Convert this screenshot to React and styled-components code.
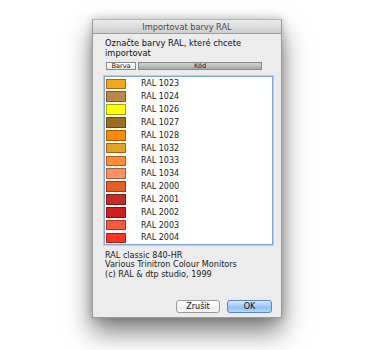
import React from 'react';
import styled, { createGlobalStyle } from 'styled-components';

const Global = createGlobalStyle`
  html, body { margin: 0; padding: 0; background: #ffffff; }
  body { font-family: "DejaVu Sans", "Liberation Sans", sans-serif; }
`;

const Page = styled.div`
  width: 380px;
  height: 350px;
  padding: 19px 0 0 92px;
  box-sizing: border-box;
`;

const Window = styled.div`
  width: 190px;
  height: 299px;
  box-sizing: border-box;
  background: #ececec;
  border: 1px solid #9a9a9a;
  border-top-color: #b4b4b4;
  box-shadow: 0 14px 24px rgba(0, 0, 0, 0.5), 0 0 9px rgba(0, 0, 0, 0.22);
  display: flex;
  flex-direction: column;
`;

const TitleBar = styled.div`
  height: 13px;
  background: linear-gradient(#ebebeb, #cfcfcf);
  border-bottom: 1px solid #9c9c9c;
  display: flex;
  align-items: center;
  justify-content: center;
  font-size: 8.2px;
  color: #4a4a4a;
`;

const Body = styled.div`
  flex: 1;
  display: flex;
  flex-direction: column;
  padding: 5px 8px 0 11px;
`;

const Prompt = styled.div`
  font-size: 8.3px;
  line-height: 9.5px;
  color: #111;
  margin-left: 1px;
`;

const HeaderRow = styled.div`
  display: flex;
  gap: 2px;
  margin: 4px 0 0 2px;
  width: 156px;
  height: 8px;
`;

const HeadCell = styled.div`
  box-sizing: border-box;
  width: ${p => (p.$grow ? 'auto' : '30px')};
  flex: ${p => (p.$grow ? 1 : 'none')};
  border: 1px solid #8a8a8a;
  background: ${p => (p.$active ? 'linear-gradient(#d2d2d2, #a9a9a9)' : 'linear-gradient(#ffffff, #e4e4e4)')};
  font-size: 6.6px;
  line-height: 6px;
  color: #222;
  display: flex;
  align-items: center;
  justify-content: center;
`;

const ListBox = styled.div`
  margin-top: 6px;
  width: 169px;
  height: 169px;
  box-sizing: border-box;
  background: #fff;
  border: 1px solid #7ea7de;
  box-shadow: 0 0 0 1px rgba(140, 180, 230, 0.55);
  padding-top: 0.5px;
`;

const Row = styled.div`
  height: 12.83px;
  display: flex;
  align-items: center;
`;

const Swatch = styled.div`
  width: 20px;
  height: 10.7px;
  box-sizing: border-box;
  margin-left: 1px;
  background: ${p => p.$color};
  border: 1px solid rgba(0, 0, 0, 0.35);
`;

const RowLabel = styled.span`
  margin-left: 15px;
  font-size: 8px;
  color: #1a1a1a;
`;

const Info = styled.div`
  margin-top: 6px;
  margin-left: 1px;
  font-size: 8.1px;
  line-height: 9.4px;
  color: #1a1a1a;
`;

const Buttons = styled.div`
  margin-top: auto;
  margin-bottom: 4px;
  display: flex;
  justify-content: flex-end;
  gap: 7px;
  padding-right: 1px;
`;

const Button = styled.div`
  width: ${p => (p.$primary ? '45px' : '44px')};
  height: 13px;
  box-sizing: border-box;
  border-radius: 3px;
  border: 1px solid ${p => (p.$primary ? '#5c86c2' : '#9a9a9a')};
  background: ${p => (p.$primary ? 'linear-gradient(#d4e8fc, #9ccaf5 50%, #86bcf2 51%, #b4d9fc)' : 'linear-gradient(#ffffff, #f3f3f3 50%, #e8e8e8 51%, #f7f7f7)')};
  font-size: 8px;
  color: #111;
  display: flex;
  align-items: center;
  justify-content: center;
`;

const colors = [
  ['RAL 1023', '#f8a60f'],
  ['RAL 1024', '#bf8648'],
  ['RAL 1026', '#ffff00'],
  ['RAL 1027', '#9c6d1e'],
  ['RAL 1028', '#ff8a00'],
  ['RAL 1032', '#eca023'],
  ['RAL 1033', '#ff8c32'],
  ['RAL 1034', '#fc9060'],
  ['RAL 2000', '#e85c1c'],
  ['RAL 2001', '#c42c24'],
  ['RAL 2002', '#d41b1b'],
  ['RAL 2003', '#f8583a'],
  ['RAL 2004', '#ff3320'],
];

export default function App() {
  return (
    <Page>
      <Global />
      <Window>
        <TitleBar>Importovat barvy RAL</TitleBar>
        <Body>
          <Prompt>
            Označte barvy RAL, které chcete
            <br />
            importovat
          </Prompt>
          <HeaderRow>
            <HeadCell>Barva</HeadCell>
            <HeadCell $grow $active>Kód</HeadCell>
          </HeaderRow>
          <ListBox>
            {colors.map(([name, c]) => (
              <Row key={name}>
                <Swatch $color={c} />
                <RowLabel>{name}</RowLabel>
              </Row>
            ))}
          </ListBox>
          <Info>
            RAL classic 840-HR
            <br />
            Various Trinitron Colour Monitors
            <br />
            (c) RAL &amp; dtp studio, 1999
          </Info>
          <Buttons>
            <Button>Zrušit</Button>
            <Button $primary>OK</Button>
          </Buttons>
        </Body>
      </Window>
    </Page>
  );
}
